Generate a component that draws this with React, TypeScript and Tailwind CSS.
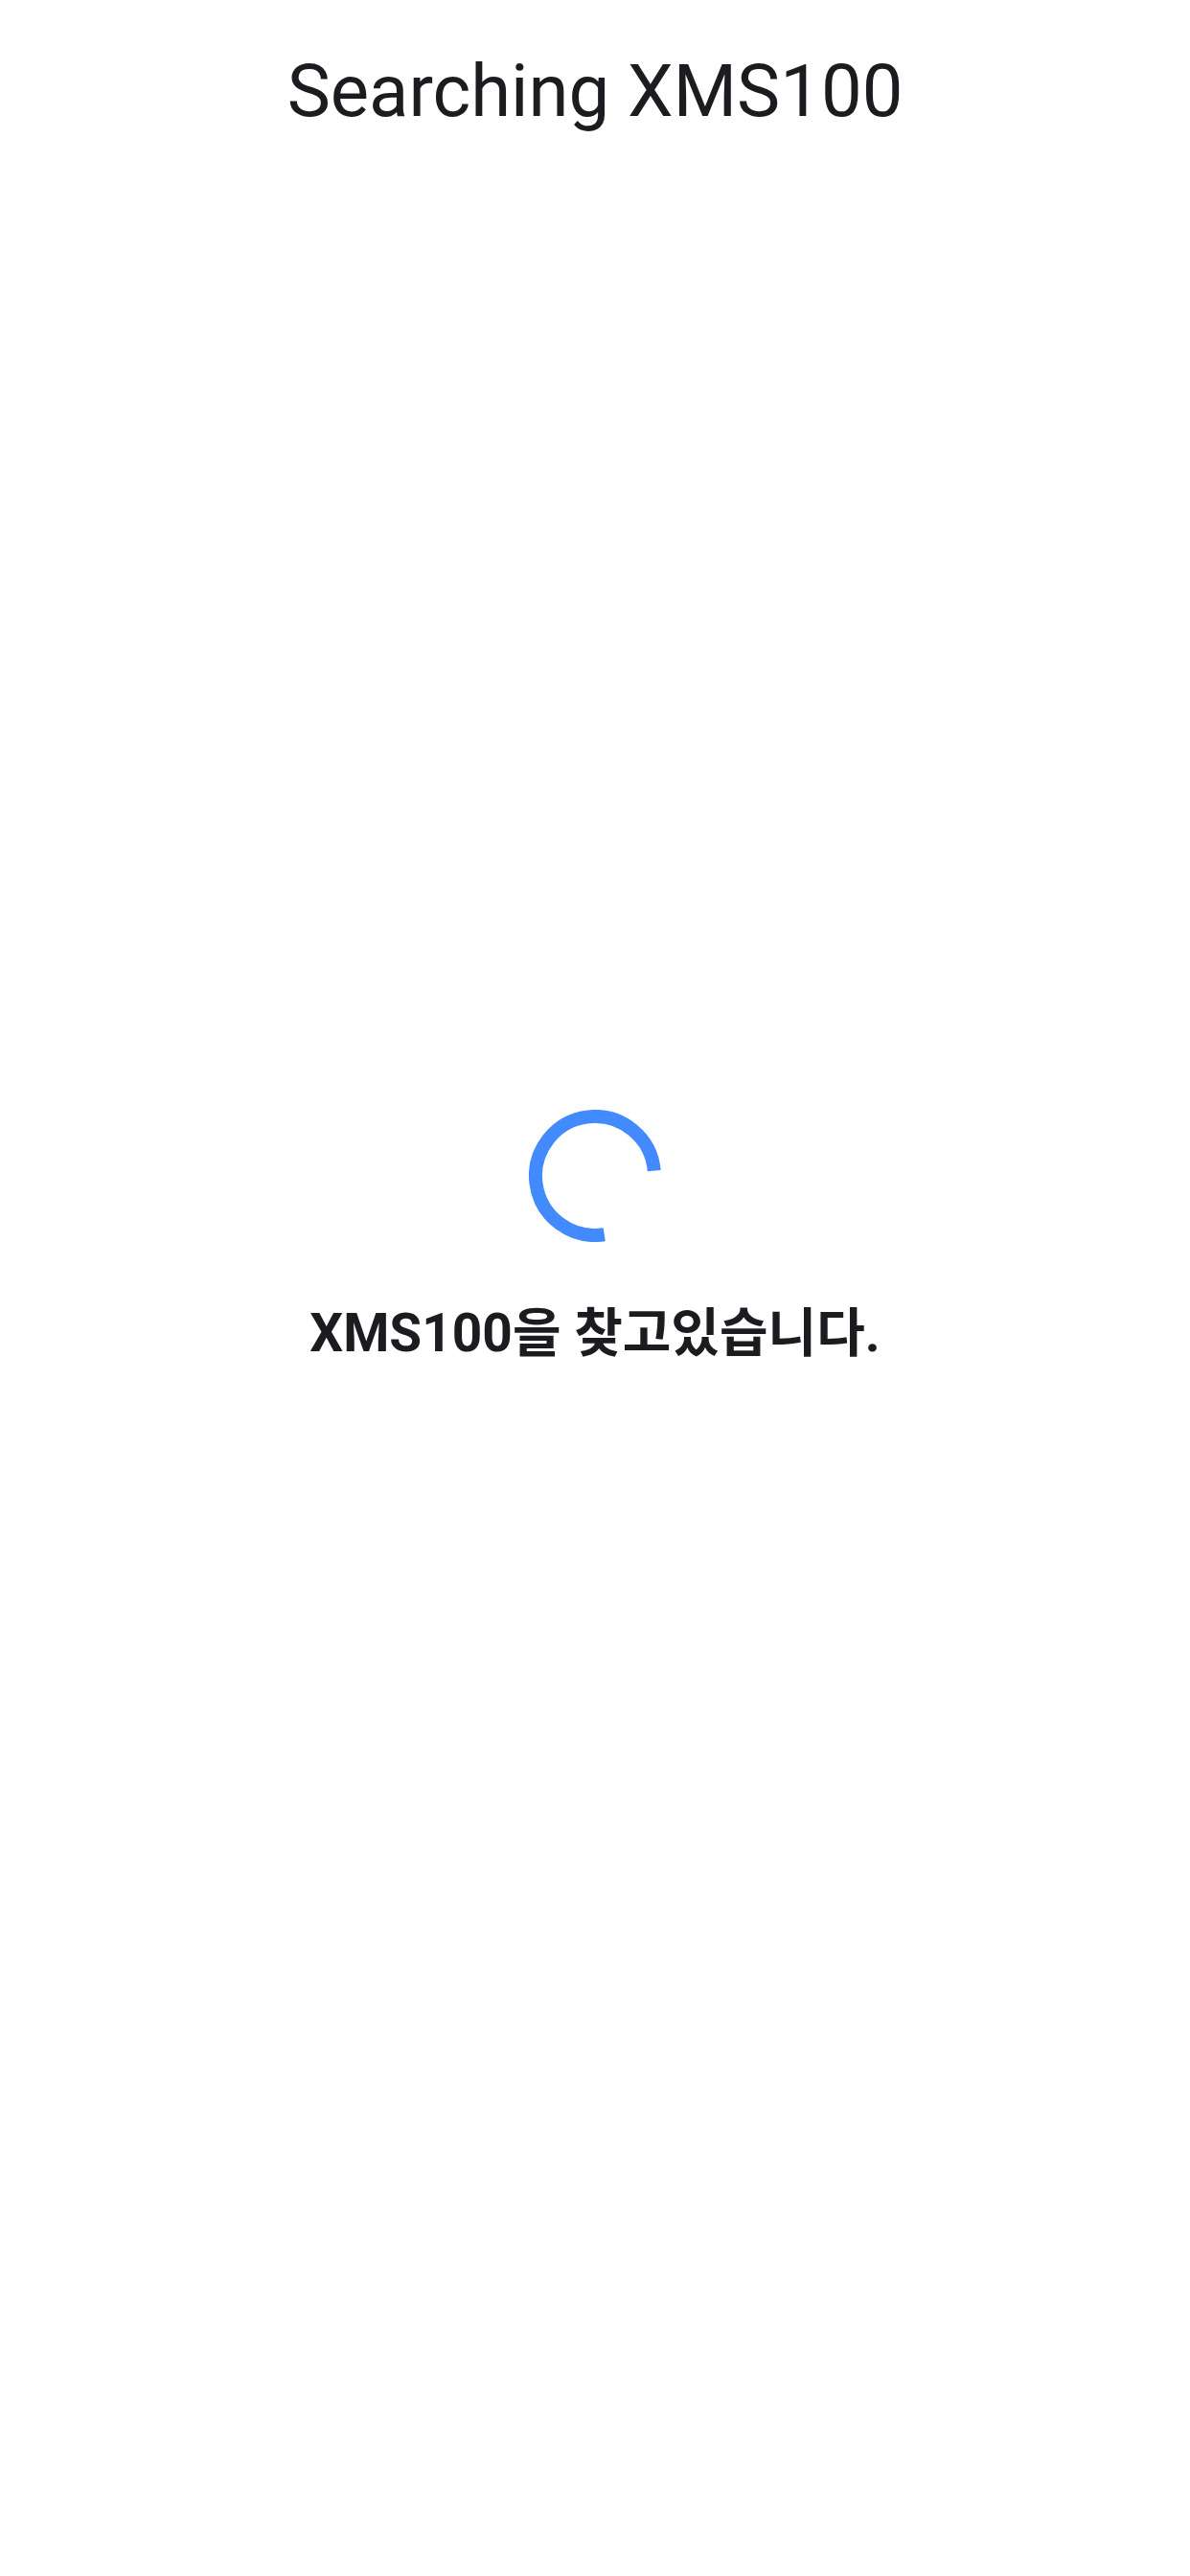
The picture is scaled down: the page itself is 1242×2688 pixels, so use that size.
import React from "react";

export default function App() {
  return (
    <div className="min-h-[2688px] w-full bg-white flex flex-col items-center font-['Roboto','Noto_Sans_CJK_KR',sans-serif] text-[#1c1b1f]">
      <header className="w-full pt-[57px] flex justify-center">
        <h1 className="text-[76px] leading-none font-normal">Searching XMS100</h1>
      </header>
      <main className="flex flex-col items-center mt-[1025px]">
        <svg width="138" height="138" viewBox="0 0 138 138" aria-label="loading">
          <path
            d="M 78.7 130.24 A 62 62 0 1 1 130.76 63.6"
            fill="none"
            stroke="#448aff"
            strokeWidth="14"
            strokeLinecap="butt"
          />
        </svg>
        <p className="mt-[68px] text-[55px] leading-none font-bold">XMS100을 찾고있습니다.</p>
      </main>
    </div>
  );
}
